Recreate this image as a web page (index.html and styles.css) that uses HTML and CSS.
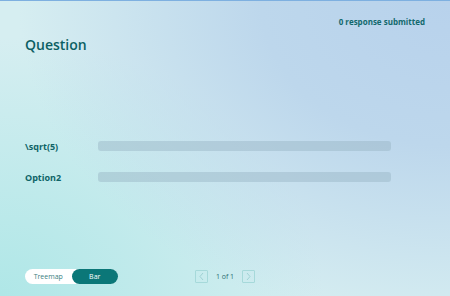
FILE: index.html
```html
<!DOCTYPE html>
<html lang="en">
<head>
    <meta charset="UTF-8">
    <meta name="viewport" content="width=device-width, initial-scale=1.0">
    <title>Poll Results</title>
    <link rel="stylesheet" href="styles.css">
</head>
<body>
    <div class="page">
        <div class="meta">0 response submitted</div>
        <h1 class="title">Question</h1>

        <div class="rows">
            <div class="row">
                <span class="label">\sqrt(5)</span>
                <div class="bar"></div>
            </div>
            <div class="row">
                <span class="label">Option2</span>
                <div class="bar"></div>
            </div>
        </div>

        <div class="footer">
            <div class="toggle">
                <button class="seg">Treemap</button>
                <button class="seg active">Bar</button>
            </div>
            <div class="pager">
                <button class="nav" aria-label="Previous">
                    <svg width="7" height="9" viewBox="0 0 7 9"><path d="M5 1 L2 4.5 L5 8" fill="none" stroke="#9fd2d4" stroke-width="1"/></svg>
                </button>
                <span class="count">1 of 1</span>
                <button class="nav" aria-label="Next">
                    <svg width="7" height="9" viewBox="0 0 7 9"><path d="M2 1 L5 4.5 L2 8" fill="none" stroke="#9fd2d4" stroke-width="1"/></svg>
                </button>
            </div>
            <div></div>
        </div>
    </div>
</body>
</html>
```

FILE: styles.css
```css
body {
    margin: 0;
    font-family: 'Open Sans', 'Noto Sans', sans-serif;
    color: #0b6468;
}
.page {
    height: 296px;
    box-sizing: border-box;
    border-top: 1px solid #7eb0e0;
    padding: 15px 25px 12px;
    display: flex;
    flex-direction: column;
    background:
        radial-gradient(ellipse 120% 140% at 100% 0%, #b8d2ec 0%, #bdd7ec 35%, rgba(190, 214, 236, 0) 80%),
        radial-gradient(ellipse 90% 110% at 0% 100%, #afe7e7 0%, rgba(175, 231, 231, 0) 80%),
        #d6eef1;
}
.meta {
    text-align: right;
    font-size: 8px;
    font-weight: 700;
    line-height: 12px;
    color: #12696d;
}
.title {
    margin: 8px 0 0;
    font-size: 14px;
    font-weight: 600;
    line-height: 18px;
    color: #0b5f63;
}
.rows {
    margin-top: 87px;
    display: flex;
    flex-direction: column;
    gap: 21px;
}
.row {
    display: flex;
    align-items: center;
    height: 10px;
}
.label {
    width: 73px;
    font-size: 9px;
    font-weight: 700;
    color: #0e6367;
}
.bar {
    width: 293px;
    height: 10px;
    border-radius: 3px;
    background-color: rgba(150, 180, 195, 0.45);
}
.footer {
    margin-top: auto;
    display: grid;
    grid-template-columns: 1fr auto 1fr;
    align-items: center;
}
.toggle {
    display: flex;
    width: 93px;
    height: 15px;
    background: white;
    border-radius: 8px;
}
.seg {
    flex: 1;
    border: none;
    border-radius: 8px;
    padding: 0;
    background: transparent;
    font-family: inherit;
    font-size: 7px;
    color: #3b7f82;
    cursor: pointer;
}
.seg.active {
    background-color: #0b7778;
    color: white;
}
.pager {
    display: flex;
    align-items: center;
    gap: 8px;
}
.nav {
    width: 13px;
    height: 13px;
    padding: 0;
    border: 1px solid #a6d9da;
    border-radius: 1px;
    background: transparent;
    display: flex;
    align-items: center;
    justify-content: center;
}
.count {
    font-size: 7px;
    color: #2d6f72;
}
```
